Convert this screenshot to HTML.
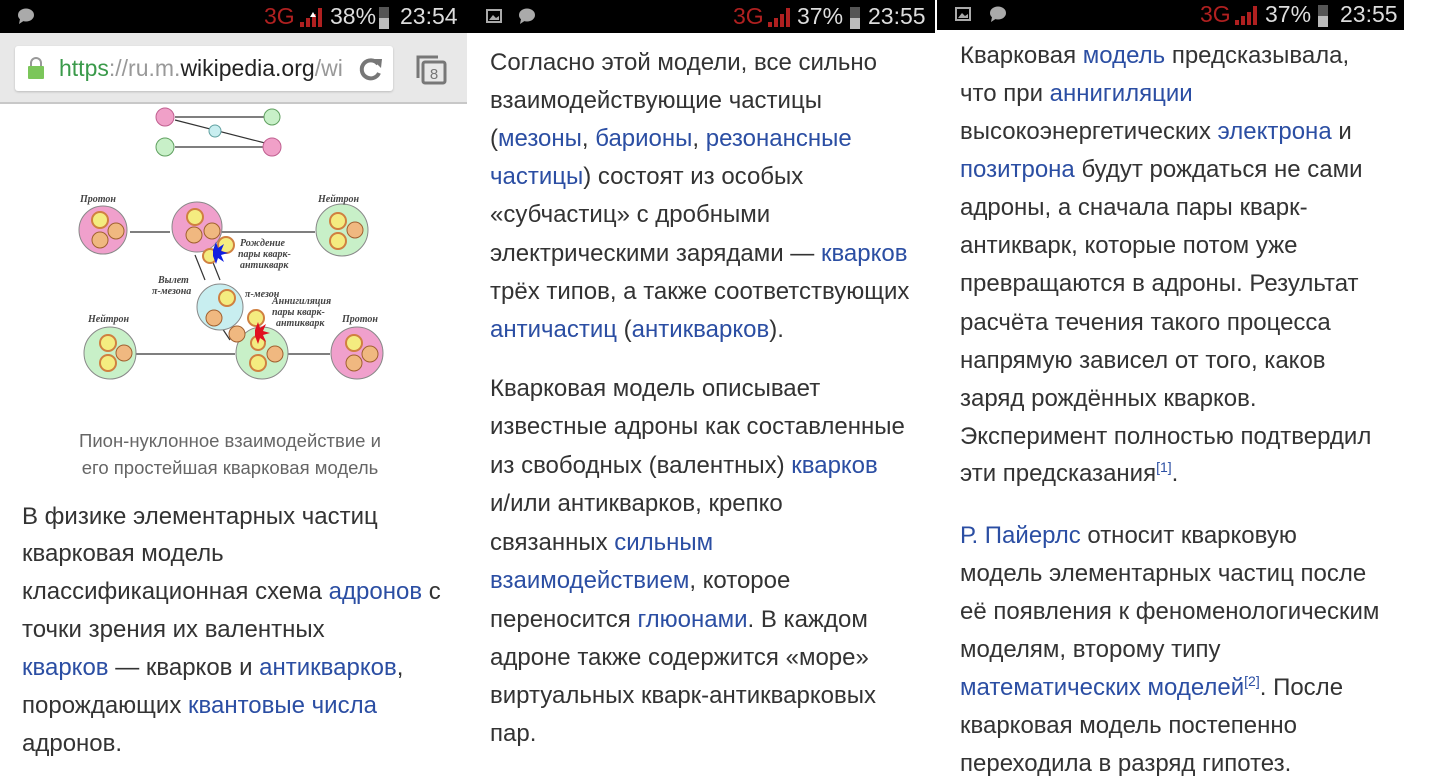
<!DOCTYPE html>
<html><head><meta charset="utf-8">
<style>
*{margin:0;padding:0;box-sizing:border-box}
body{width:1429px;height:774px;background:#fff;position:relative;overflow:hidden;font-family:"Liberation Sans","DejaVu Sans",sans-serif;color:#333}
.sb{position:absolute;top:0;background:#000;color:#ddd;font-size:23px}
.sb span{position:absolute;top:3px}
.g3{color:#b02020}
.l{position:absolute;white-space:nowrap;font-size:24px;line-height:38px;height:38px;color:#333}
a{color:#2b4ea3;text-decoration:none}
sup{font-size:14px;line-height:0}
.cap{position:absolute;font-size:18.5px;color:#666;white-space:nowrap;text-align:center;width:440px;left:10px}
</style></head><body>

<!-- status bars -->
<div class="sb" style="left:0;width:468px;height:33px">
 <svg style="position:absolute;left:17px;top:8px" width="18" height="17"><ellipse cx="9" cy="7" rx="8" ry="6.5" fill="#aaa"/><path d="M3 11 L2 16 L8 12Z" fill="#aaa"/></svg>
 <span class="g3" style="left:264px">3G</span>
 <svg style="position:absolute;left:298px;top:5px" width="26" height="24"><g fill="#b02020"><rect x="2" y="17" width="4" height="5"/><rect x="8" y="13" width="4" height="9"/><rect x="14" y="9" width="4" height="13"/><rect x="20" y="3" width="4" height="19"/></g><path d="M12 12 L15 7 L18 12Z" fill="#fff"/></svg>
 <span style="left:330px">38%</span>
 <div style="position:absolute;left:379px;top:7px;width:10px;height:22px;background:#555"></div>
 <div style="position:absolute;left:379px;top:18px;width:10px;height:11px;background:#bbb"></div>
 <span style="left:400px">23:54</span>
</div>
<div class="sb" style="left:468px;width:467px;height:33px">
 <svg style="position:absolute;left:18px;top:9px" width="16" height="14"><rect x="1" y="1" width="14" height="12" fill="none" stroke="#aaa" stroke-width="2"/><path d="M3 11 L7 6 L10 9 L13 7 L13 11Z" fill="#aaa"/></svg>
 <svg style="position:absolute;left:50px;top:8px" width="18" height="17"><ellipse cx="9" cy="7" rx="8" ry="6.5" fill="#aaa"/><path d="M3 11 L2 16 L8 12Z" fill="#aaa"/></svg>
 <span class="g3" style="left:265px">3G</span>
 <svg style="position:absolute;left:298px;top:5px" width="26" height="24"><g fill="#b02020"><rect x="2" y="17" width="4" height="5"/><rect x="8" y="13" width="4" height="9"/><rect x="14" y="9" width="4" height="13"/><rect x="20" y="3" width="4" height="19"/></g></svg>
 <span style="left:329px">37%</span>
 <div style="position:absolute;left:382px;top:7px;width:10px;height:22px;background:#555"></div>
 <div style="position:absolute;left:382px;top:18px;width:10px;height:11px;background:#bbb"></div>
 <span style="left:400px">23:55</span>
</div>
<div class="sb" style="left:937px;width:467px;height:30px">
 <svg style="position:absolute;left:18px;top:7px" width="16" height="14"><rect x="1" y="1" width="14" height="12" fill="none" stroke="#aaa" stroke-width="2"/><path d="M3 11 L7 6 L10 9 L13 7 L13 11Z" fill="#aaa"/></svg>
 <svg style="position:absolute;left:52px;top:6px" width="18" height="17"><ellipse cx="9" cy="7" rx="8" ry="6.5" fill="#aaa"/><path d="M3 11 L2 16 L8 12Z" fill="#aaa"/></svg>
 <span class="g3" style="left:263px;top:1px">3G</span>
 <svg style="position:absolute;left:296px;top:3px" width="26" height="24"><g fill="#b02020"><rect x="2" y="17" width="4" height="5"/><rect x="8" y="13" width="4" height="9"/><rect x="14" y="9" width="4" height="13"/><rect x="20" y="3" width="4" height="19"/></g></svg>
 <span style="left:328px;top:1px">37%</span>
 <div style="position:absolute;left:381px;top:5px;width:10px;height:22px;background:#555"></div>
 <div style="position:absolute;left:381px;top:16px;width:10px;height:11px;background:#bbb"></div>
 <span style="left:403px;top:1px">23:55</span>
</div>

<!-- url bar -->
<div style="position:absolute;left:0;top:33px;width:467px;height:71px;background:#e8e8e8;border-bottom:2px solid #c8c8c8"></div>
<div style="position:absolute;left:15px;top:46px;width:378px;height:45px;background:#fff;border-radius:3px;box-shadow:0 1px 2px #bbb"></div>
<svg style="position:absolute;left:27px;top:56px" width="18" height="24"><path d="M4 10 V7 A5 5 0 0 1 14 7 V10" fill="none" stroke="#999" stroke-width="2"/><rect x="1" y="10" width="16" height="13" rx="1" fill="#7bc65a"/></svg>
<div style="position:absolute;left:59px;top:55px;font-size:23px;white-space:nowrap;color:#999"><span style="color:#3a9a4a">https</span>://ru.m.<span style="color:#222">wikipedia.org</span>/wi</div>
<svg style="position:absolute;left:358px;top:56px" width="26" height="26"><path d="M20 8 A9 9 0 1 0 21 17" fill="none" stroke="#777" stroke-width="4"/><path d="M14 3 L24 3 L23 12Z" fill="#777"/></svg>
<svg style="position:absolute;left:414px;top:52px" width="34" height="34"><path d="M4 26 V5 H24" fill="none" stroke="#777" stroke-width="3"/><rect x="9" y="10" width="22" height="21" rx="2" fill="none" stroke="#777" stroke-width="3"/><text x="20" y="27" font-size="15" fill="#777" text-anchor="middle" font-family="Liberation Sans">8</text></svg>

<!-- diagram -->
<svg style="position:absolute;left:60px;top:100px" width="340" height="320" font-family="Liberation Serif" font-style="italic" font-weight="bold" font-size="10" fill="#444">
 <g stroke="#333" stroke-width="1.2">
  <line x1="115" y1="17" x2="205" y2="17"/><line x1="115" y1="47" x2="205" y2="47"/><line x1="115" y1="20" x2="205" y2="43"/>
  <line x1="70" y1="132" x2="110" y2="132"/><line x1="162" y1="132" x2="255" y2="132"/>
  <line x1="72" y1="254" x2="175" y2="254"/><line x1="228" y1="254" x2="270" y2="254"/>
  <line x1="135" y1="155" x2="145" y2="180"/><line x1="150" y1="155" x2="160" y2="180"/><line x1="160" y1="225" x2="170" y2="240"/>
 </g>
 <circle cx="105" cy="17" r="9" fill="#f0a0c8" stroke="#c06090"/><circle cx="212" cy="17" r="8" fill="#c8f0c8" stroke="#60a060"/>
 <circle cx="105" cy="47" r="9" fill="#c8f0c8" stroke="#60a060"/><circle cx="212" cy="47" r="9" fill="#f0a0c8" stroke="#c06090"/>
 <circle cx="155" cy="31" r="6" fill="#c8eef0" stroke="#60a0a0"/>
 <g stroke="#888">
 <circle cx="43" cy="130" r="24" fill="#f0a0cc"/><circle cx="137" cy="127" r="25" fill="#f0a0cc"/>
 <circle cx="282" cy="130" r="26" fill="#c8f0c8"/><circle cx="160" cy="207" r="23" fill="#c8eef0"/>
 <circle cx="50" cy="253" r="26" fill="#c8f0c8"/><circle cx="202" cy="253" r="26" fill="#c8f0c8"/><circle cx="297" cy="253" r="26" fill="#f0a0cc"/>
 </g>
 <g fill="#f4ec80" stroke="#d08040" stroke-width="2">
  <circle cx="40" cy="120" r="8"/><circle cx="135" cy="117" r="8"/><circle cx="166" cy="145" r="8"/><circle cx="150" cy="156" r="7"/>
  <circle cx="278" cy="121" r="8"/><circle cx="278" cy="141" r="8"/><circle cx="167" cy="198" r="8"/><circle cx="48" cy="243" r="8"/><circle cx="48" cy="263" r="8"/>
  <circle cx="198" cy="243" r="7"/><circle cx="198" cy="263" r="8"/><circle cx="196" cy="218" r="8"/><circle cx="294" cy="243" r="8"/>
 </g>
 <g fill="#f0b880" stroke="#a06030" stroke-width="1">
  <circle cx="56" cy="131" r="8"/><circle cx="40" cy="140" r="8"/><circle cx="152" cy="131" r="8"/><circle cx="134" cy="135" r="8"/><circle cx="295" cy="130" r="8"/><circle cx="154" cy="218" r="8"/>
  <circle cx="64" cy="253" r="8"/><circle cx="215" cy="254" r="8"/><circle cx="177" cy="234" r="8"/><circle cx="310" cy="254" r="8"/><circle cx="294" cy="263" r="8"/>
 </g>
 <path d="M153 150 l3-8 l2 6 l6-4 l-3 7 l7 2 l-7 2 l3 7 l-6-4 l-2 6 l-3-8Z" fill="#1020e0"/>
 <path d="M195 230 l3-8 l2 6 l6-4 l-3 7 l7 2 l-7 2 l3 7 l-6-4 l-2 6 l-3-8Z" fill="#e01020"/>
 <text x="20" y="102">Протон</text><text x="258" y="102">Нейтрон</text><text x="180" y="146">Рождение</text><text x="178" y="157">пары кварк-</text><text x="180" y="168">антикварк</text>
 <text x="98" y="183">Вылет</text><text x="92" y="194">π-мезона</text><text x="185" y="197">π-мезон</text>
 <text x="212" y="204">Аннигиляция</text><text x="212" y="215">пары кварк-</text><text x="216" y="226">антикварк</text>
 <text x="28" y="222">Нейтрон</text><text x="282" y="222">Протон</text>
</svg>
<div class="cap" style="top:430px">Пион-нуклонное взаимодействие и</div>
<div class="cap" style="top:457px">его простейшая кварковая модель</div>

<!-- panel 1 text -->
<div class="l" style="left:22px;top:498px">В физике элементарных частиц</div>
<div class="l" style="left:22px;top:535px">кварковая модель</div>
<div class="l" style="left:22px;top:573px">классификационная схема <a>адронов</a> с</div>
<div class="l" style="left:22px;top:611px">точки зрения их валентных</div>
<div class="l" style="left:22px;top:649px"><a>кварков</a> — кварков и <a>антикварков</a>,</div>
<div class="l" style="left:22px;top:687px">порождающих <a>квантовые числа</a></div>
<div class="l" style="left:22px;top:725px">адронов.</div>

<!-- panel 2 text -->
<div class="l" style="left:490px;top:44px">Согласно этой модели, все сильно</div>
<div class="l" style="left:490px;top:82px">взаимодействующие частицы</div>
<div class="l" style="left:490px;top:120px">(<a>мезоны</a>, <a>барионы</a>, <a>резонансные</a></div>
<div class="l" style="left:490px;top:158px"><a>частицы</a>) состоят из особых</div>
<div class="l" style="left:490px;top:196px">«субчастиц» с дробными</div>
<div class="l" style="left:490px;top:235px">электрическими зарядами — <a>кварков</a></div>
<div class="l" style="left:490px;top:273px">трёх типов, а также соответствующих</div>
<div class="l" style="left:490px;top:311px"><a>античастиц</a> (<a>антикварков</a>).</div>
<div class="l" style="left:490px;top:370px">Кварковая модель описывает</div>
<div class="l" style="left:490px;top:408px">известные адроны как составленные</div>
<div class="l" style="left:490px;top:447px">из свободных (валентных) <a>кварков</a></div>
<div class="l" style="left:490px;top:485px">и/или антикварков, крепко</div>
<div class="l" style="left:490px;top:524px">связанных <a>сильным</a></div>
<div class="l" style="left:490px;top:562px"><a>взаимодействием</a>, которое</div>
<div class="l" style="left:490px;top:601px">переносится <a>глюонами</a>. В каждом</div>
<div class="l" style="left:490px;top:639px">адроне также содержится «море»</div>
<div class="l" style="left:490px;top:677px">виртуальных кварк-антикварковых</div>
<div class="l" style="left:490px;top:715px">пар.</div>

<!-- panel 3 text -->
<div class="l" style="left:960px;top:37px">Кварковая <a>модель</a> предсказывала,</div>
<div class="l" style="left:960px;top:75px">что при <a>аннигиляции</a></div>
<div class="l" style="left:960px;top:113px">высокоэнергетических <a>электрона</a> и</div>
<div class="l" style="left:960px;top:151px"><a>позитрона</a> будут рождаться не сами</div>
<div class="l" style="left:960px;top:189px">адроны, а сначала пары кварк-</div>
<div class="l" style="left:960px;top:227px">антикварк, которые потом уже</div>
<div class="l" style="left:960px;top:265px">превращаются в адроны. Результат</div>
<div class="l" style="left:960px;top:304px">расчёта течения такого процесса</div>
<div class="l" style="left:960px;top:342px">напрямую зависел от того, каков</div>
<div class="l" style="left:960px;top:380px">заряд рождённых кварков.</div>
<div class="l" style="left:960px;top:418px">Эксперимент полностью подтвердил</div>
<div class="l" style="left:960px;top:455px">эти предсказания<sup><a>[1]</a></sup>.</div>
<div class="l" style="left:960px;top:517px"><a>Р. Пайерлс</a> относит кварковую</div>
<div class="l" style="left:960px;top:555px">модель элементарных частиц после</div>
<div class="l" style="left:960px;top:593px">её появления к феноменологическим</div>
<div class="l" style="left:960px;top:631px">моделям, второму типу</div>
<div class="l" style="left:960px;top:669px"><a>математических моделей</a><sup><a>[2]</a></sup>. После</div>
<div class="l" style="left:960px;top:707px">кварковая модель постепенно</div>
<div class="l" style="left:960px;top:745px">переходила в разряд гипотез.</div>
</body></html>
